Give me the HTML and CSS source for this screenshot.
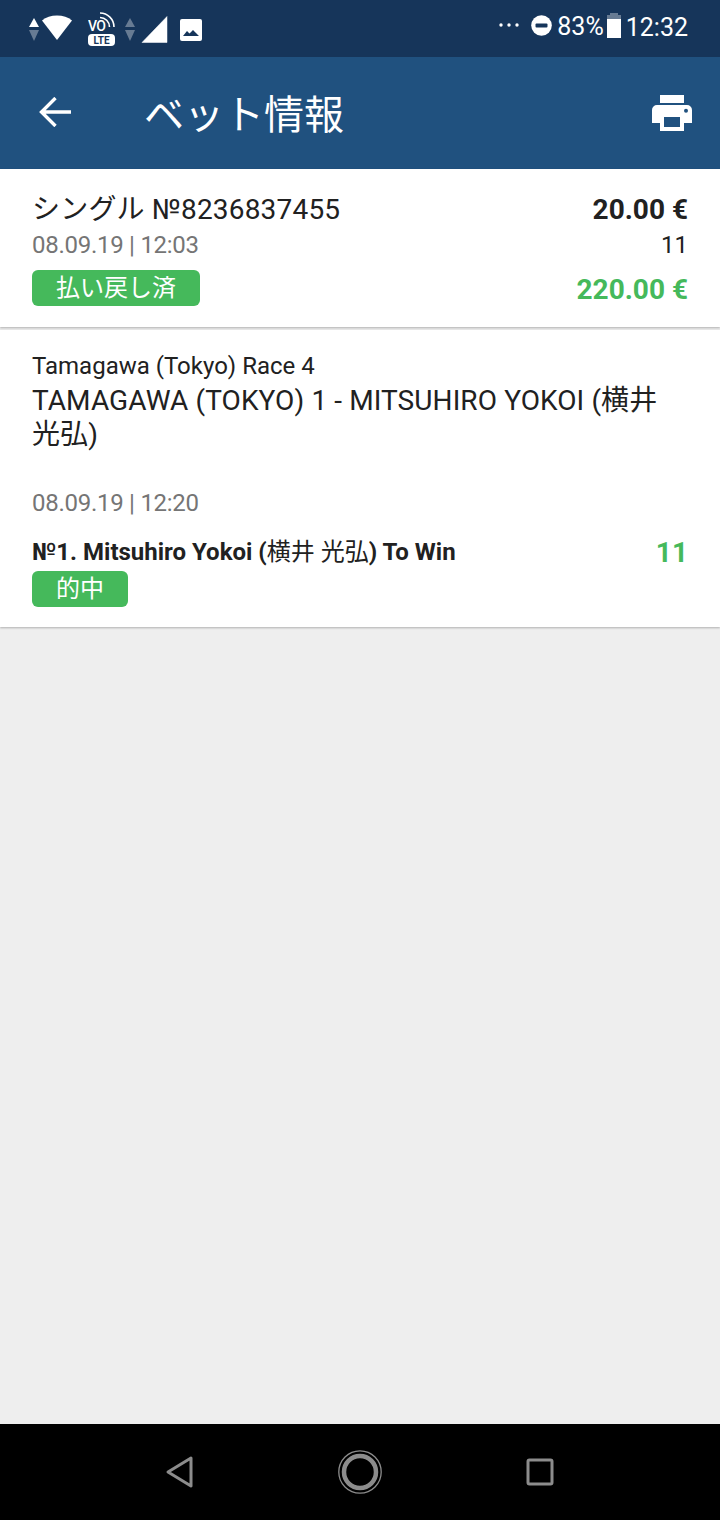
FILE: index.html
```html
<!DOCTYPE html>
<html lang="ja">
<head>
<meta charset="utf-8">
<title>ベット情報</title>
<link rel="stylesheet" href="styles.css">
</head>
<body>
<div class="screen">
  <div class="statusbar">
    <div class="status-left">
      <svg class="si-arrows" width="10" height="26" viewBox="0 0 10 26"><path d="M5 2l5 9H0z" fill="#fff"/><path d="M5 25l5-11H0z" fill="#fff" opacity=".35"/></svg>
      <svg class="si-wifi" width="32" height="26" viewBox="0 0 32 26"><path d="M1 5.500C5 2 10 .5 16 .5S27 2 31 5.500L16 25z" fill="#fff"/></svg>
      <svg class="si-volte" width="28" height="36" viewBox="0 0 28 36"><text x="0" y="20" class="si-vo">VO</text><path d="M12 6.500A9.500 9.500 0 0 1 21.500 16M12 2A14 14 0 0 1 26 16" fill="none" stroke="#fff" stroke-width="1.600"/><rect x="0" y="23" width="27" height="12" rx="4" fill="#fff"/><text x="13.500" y="32.500" class="si-lte">LTE</text></svg>
      <svg class="si-arrows2" width="10" height="26" viewBox="0 0 10 26"><path d="M5 2l5 9H0z" fill="#fff" opacity=".35"/><path d="M5 25l5-11H0z" fill="#fff" opacity=".35"/></svg>
      <svg class="si-signal" width="27" height="27" viewBox="0 0 27 27"><path d="M26 .5V26.500H1z" fill="#fff" stroke="#fff" stroke-linejoin="round" stroke-width=".5"/></svg>
      <svg class="si-image" width="22" height="22" viewBox="0 0 22 22"><rect width="22" height="22" rx="2" fill="#fff"/><path d="M3 17l4-5 2.500 2.500L13 11l6 6z" fill="#16355a"/></svg>
    </div>
    <div class="status-right">
      <svg class="si-dots" width="20" height="4" viewBox="0 0 20 4"><circle cx="2" cy="2" r="1.700" fill="#fff"/><circle cx="10" cy="2" r="1.700" fill="#fff"/><circle cx="18" cy="2" r="1.700" fill="#fff"/></svg>
      <svg class="si-dnd" width="21" height="21" viewBox="0 0 21 21"><circle cx="10.500" cy="10.500" r="10.300" fill="#fff"/><rect x="4.500" y="8.500" width="12" height="4" rx="1" fill="#16355a"/></svg>
      <span class="st-pct">83%</span>
      <svg class="si-batt" width="14" height="25" viewBox="0 0 14 25"><path d="M3 0h8v2h3v4H0V2h3z" fill="#fff" opacity=".35"/><rect y="6" width="14" height="19" fill="#fff"/></svg>
      <span class="st-time">12:32</span>
    </div>
  </div>

  <header class="toolbar">
    <button class="icon-btn back" aria-label="戻る">
      <svg width="32" height="30" viewBox="0 0 32 30"><path d="M32 15H3M16.500 1L2.500 15l14 14" fill="none" stroke="#fff" stroke-width="3.400"/></svg>
    </button>
    <h1 class="title">ベット情報</h1>
    <button class="icon-btn print" aria-label="印刷">
      <svg width="40" height="36" viewBox="0 0 40 36"><path d="M8 0h24v8H8zM5 10h30a5 5 0 0 1 5 5v13h-8v8H8v-8H0V15a5 5 0 0 1 5-5zm7 12v10h16V22z" fill="#fff" fill-rule="evenodd"/><circle cx="34" cy="15.700" r="2" fill="#20517f"/></svg>
    </button>
  </header>

  <main class="content">
    <section class="card summary">
      <div class="row">
        <div class="bet-name">シングル №8236837455</div>
        <div class="stake">20.00 €</div>
      </div>
      <div class="row row-date">
        <div class="muted">08.09.19 | 12:03</div>
        <div class="odds">11</div>
      </div>
      <div class="row row-status">
        <span class="badge badge-wide">払い戻し済</span>
        <div class="payout">220.00 €</div>
      </div>
    </section>

    <section class="card detail">
      <div class="event">Tamagawa (Tokyo) Race 4</div>
      <div class="market">TAMAGAWA (TOKYO) 1 - MITSUHIRO YOKOI (横井 光弘)</div>
      <div class="muted detail-date">08.09.19 | 12:20</div>
      <div class="row row-pick">
        <div class="pick">№1. Mitsuhiro Yokoi (<span class="pick-cjk">横井 光弘</span>) To Win</div>
        <div class="pick-odds">11</div>
      </div>
      <span class="badge badge-narrow">的中</span>
    </section>
  </main>

  <nav class="navbar">
    <svg width="30" height="34" viewBox="0 0 30 34"><path d="M26 3L3 17l23 14z" fill="none" stroke="#8c8c8c" stroke-width="3" stroke-linejoin="round"/></svg>
    <svg width="44" height="44" viewBox="0 0 44 44"><circle cx="22" cy="22" r="21.200" fill="none" stroke="#8c8c8c" stroke-width="1.300"/><circle cx="22" cy="22" r="16" fill="none" stroke="#8c8c8c" stroke-width="4.500"/></svg>
    <svg width="28" height="28" viewBox="0 0 28 28"><rect x="2" y="2" width="24" height="24" rx="1.500" fill="none" stroke="#8c8c8c" stroke-width="3"/></svg>
  </nav>
</div>
</body>
</html>
```
FILE: styles.css
```css
* { box-sizing: border-box; }
html, body { margin: 0; padding: 0; }
body {
  font-family: Roboto, "Noto Sans CJK JP", sans-serif;
  color: #212121;
  background: #eeeeee;
}
.screen {
  width: 720px;
  height: 1520px;
  display: flex;
  flex-direction: column;
  overflow: hidden;
}
.statusbar {
  height: 57px;
  flex: none;
  background: #16355a;
  display: flex;
  justify-content: space-between;
  padding: 0 32px 0 29px;
  color: #fff;
}
.status-left { display: flex; align-items: flex-start; }
.si-arrows { margin-top: 16px; }
.si-wifi { margin: 15px 0 0 2px; }
.si-volte { margin: 11px 0 0 15px; }
.si-arrows2 { margin: 16px 0 0 9px; }
.si-signal { margin: 16px 0 0 6px; }
.si-image { margin: 19px 0 0 12px; }
.status-right { display: flex; align-items: flex-start; }
.si-dots { margin-top: 23px; }
.si-dnd { margin: 15px 0 0 12px; }
.st-pct { font-size: 25px; line-height: 28px; margin: 13px 0 0 5px; }
.si-batt { margin: 13px 0 0 3px; }
.st-time { font-size: 25px; line-height: 28px; margin: 14px 0 0 5px; }
.si-vo { font: 500 14px Roboto, sans-serif; fill: #fff; letter-spacing: -.8px; }
.si-lte { font: 700 10px Roboto, sans-serif; fill: #16355a; text-anchor: middle; }

.toolbar {
  height: 112px;
  flex: none;
  background: #20517f;
  display: flex;
  align-items: center;
  padding: 0 28px 0 39px;
}
.icon-btn {
  border: 0;
  padding: 0;
  background: none;
  display: flex;
}
.back { margin-top: -2px; }
.title {
  flex: 1;
  margin: 6px 0 0 73px;
  color: #fff;
  font-size: 40px;
  line-height: 48px;
  font-weight: 400;
}

.content { flex: 1; display: flex; flex-direction: column; gap: 3px; }
.card {
  background: #fff;
  box-shadow: 0 1px 2px rgba(0, 0, 0, .26);
  padding: 0 32px;
}
.summary { height: 158px; padding-top: 25px; }
.detail { height: 297px; padding-top: 21px; }
.row { display: flex; justify-content: space-between; }
.bet-name { font-size: 28px; line-height: 32px; letter-spacing: .2px; }
.stake { font-size: 28px; line-height: 32px; font-weight: 700; padding-left: 1px; }
.row-date { margin-top: 3px; }
.muted { color: #757575; font-size: 24px; line-height: 32px; letter-spacing: -.27px; }
.odds { font-size: 24px; line-height: 32px; }
.row-status { margin-top: 9px; align-items: flex-start; }
.payout { color: #45b95b; font-size: 28px; line-height: 36px; font-weight: 700; margin-top: 2px; }
.badge {
  display: block;
  height: 36px;
  background: #45b95b;
  border-radius: 6px;
  color: #fff;
  font-size: 24px;
  line-height: 37px;
  text-align: center;
}
.badge-wide { width: 168px; }
.badge-narrow { width: 96px; }
.event { font-size: 24px; line-height: 30px; }
.market { font-size: 28px; line-height: 34px; margin-top: 3px; letter-spacing: .1px; }
.detail-date { margin-top: 35px; }
.row-pick { margin-top: 18px; align-items: center; }
.pick { font-size: 24px; line-height: 30px; margin-bottom: 2px; font-weight: 700; }
.pick-cjk { font-weight: 400; }
.pick-odds { color: #45b95b; font-size: 28px; line-height: 32px; font-weight: 700; }
.detail .badge { margin-top: 2px; }

.navbar {
  height: 96px;
  flex: none;
  background: #000;
  display: grid;
  grid-template-columns: repeat(3, 180px);
  justify-content: center;
  justify-items: center;
  align-items: center;
}
```
